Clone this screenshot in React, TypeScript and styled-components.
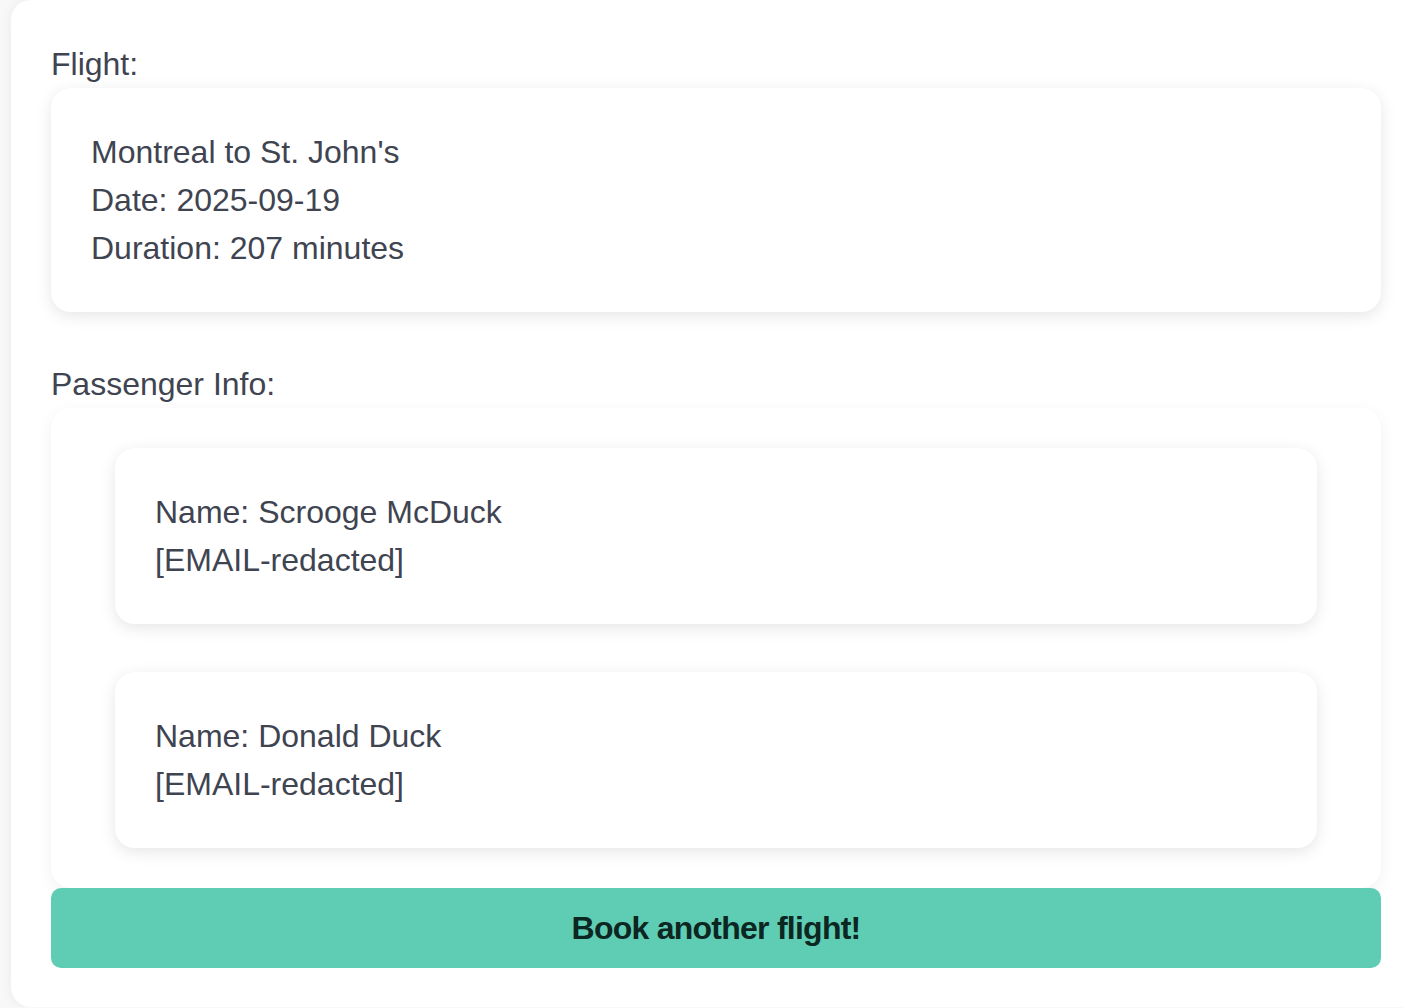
import React from "react";
import styled, { createGlobalStyle } from "styled-components";

const GlobalStyle = createGlobalStyle`
  html, body {
    margin: 0;
    padding: 0;
    background: #f8f8f8;
    overflow: hidden;
  }
  body {
    font-family: "Liberation Sans", Arial, Helvetica, sans-serif;
    color: #3f4451;
  }
`;

const Page = styled.div`
  padding-left: 11px;
  width: 1410px;
`;

const OuterCard = styled.div`
  box-sizing: border-box;
  width: 1410px;
  height: 1007px;
  background: #ffffff;
  border-radius: 20px;
  padding: 40px;
  box-shadow: 0 0 14px rgba(0, 0, 0, 0.06);
  display: flex;
  flex-direction: column;
`;

const Label = styled.div<{ $spaced?: boolean }>`
  font-size: 32px;
  line-height: 48px;
  margin-top: ${(p) => (p.$spaced ? "48px" : "0")};
`;

const Card = styled.div`
  background: #ffffff;
  border-radius: 20px;
  padding: 40px;
  box-shadow: 0 4px 16px rgba(0, 0, 0, 0.1);
  font-size: 32px;
  line-height: 48px;
  display: flex;
  flex-direction: column;
`;

const PassengerList = styled.div`
  background: #ffffff;
  border-radius: 20px;
  padding: 40px 64px;
  box-shadow: 0 4px 16px rgba(0, 0, 0, 0.06);
  display: flex;
  flex-direction: column;
  gap: 48px;
`;

const Line = styled.div`
  white-space: nowrap;
`;

const BookButton = styled.button`
  flex: none;
  height: 80px;
  border: none;
  border-radius: 10px;
  background: #5ecdb4;
  color: #0c2621;
  font-family: "Liberation Sans", Arial, Helvetica, sans-serif;
  font-weight: bold;
  font-size: 32px;
  letter-spacing: -0.75px;
  cursor: pointer;
  display: flex;
  align-items: center;
  justify-content: center;
  padding: 0;
`;

const passengers = [
  { name: "Scrooge McDuck", email: "[EMAIL-redacted]" },
  { name: "Donald Duck", email: "[EMAIL-redacted]" },
];

export default function App() {
  return (
    <>
      <GlobalStyle />
      <Page>
        <OuterCard>
          <Label>Flight:</Label>
          <Card>
            <Line>Montreal to St. John's</Line>
            <Line>Date: 2025-09-19</Line>
            <Line>Duration: 207 minutes</Line>
          </Card>
          <Label $spaced>Passenger Info:</Label>
          <PassengerList>
            {passengers.map((p) => (
              <Card key={p.name}>
                <Line>Name: {p.name}</Line>
                <Line>{p.email}</Line>
              </Card>
            ))}
          </PassengerList>
          <BookButton>Book another flight!</BookButton>
        </OuterCard>
      </Page>
    </>
  );
}
